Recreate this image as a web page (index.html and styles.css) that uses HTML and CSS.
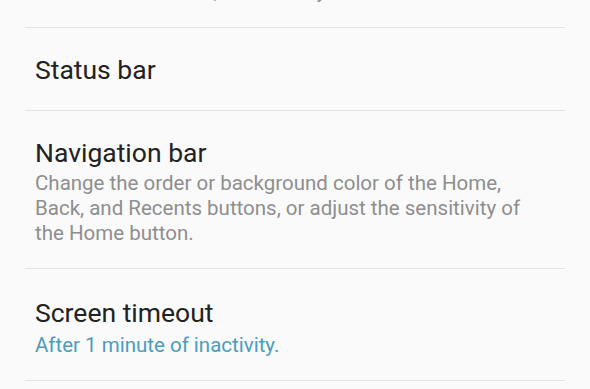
FILE: index.html
```html
<!DOCTYPE html>
<html>
<head>
<meta charset="utf-8">
<link rel="stylesheet" href="styles.css">
</head>
<body>
<div class="list">
  <div class="item item-cut">
    <div class="sub">Notifications are on, and the key</div>
  </div>
  <div class="item">
    <div class="title">Status bar</div>
  </div>
  <div class="item item-sub">
    <div class="title">Navigation bar</div>
    <div class="sub">Change the order or background color of the Home, Back, and Recents buttons, or adjust the sensitivity of the Home button.</div>
  </div>
  <div class="item item-sub item-timeout">
    <div class="title">Screen timeout</div>
    <div class="sub accent">After 1 minute of inactivity.</div>
  </div>
</div>
</body>
</html>
```
FILE: styles.css
```css
html, body {
  margin: 0;
  padding: 0;
  background: #fafafa;
  overflow: hidden;
}
body {
  font-family: Roboto, "Noto Sans", sans-serif;
  width: 590px;
  height: 389px;
}
.list {
  padding: 0 25px;
}
.item {
  padding: 27px 10px 25px;
  border-bottom: 1px solid #e2e2e2;
}
.item-sub {
  padding-bottom: 22px;
}
.item-cut {
  margin-top: -24px;
  padding: 0 10px 23px;
}
.item-timeout {
  padding-top: 29px;
}
.title {
  font-size: 26.5px;
  line-height: 30px;
  color: #222222;
}
.sub {
  font-size: 20.5px;
  line-height: 25px;
  color: #8e8e8e;
  padding-right: 25px;
  margin-top: 3px;
}
.accent {
  color: #4a9dbd;
  margin-top: 5px;
}
```
